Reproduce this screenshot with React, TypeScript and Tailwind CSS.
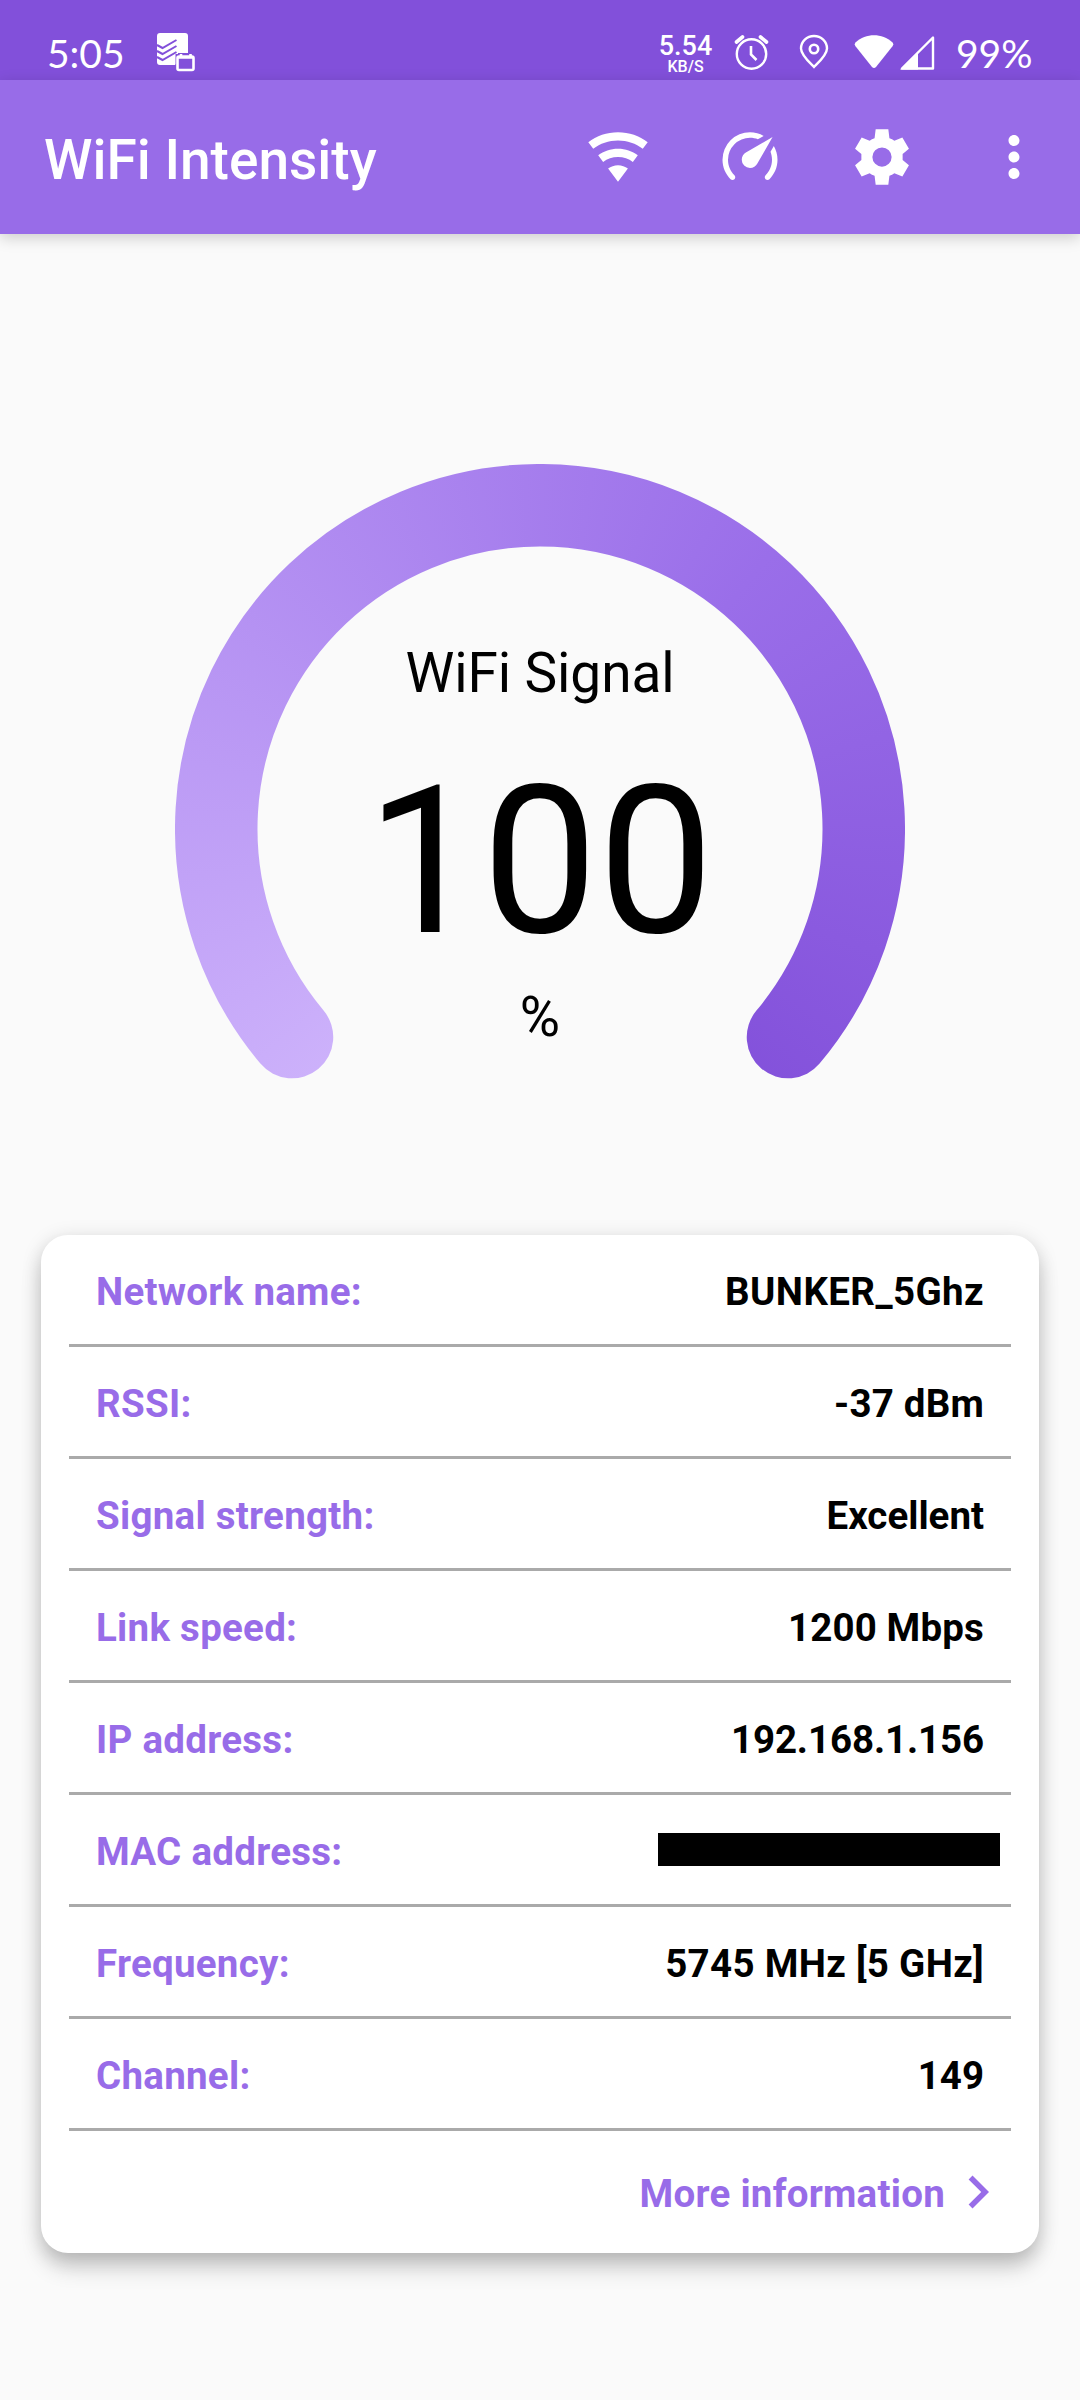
import { MdMoreVert, MdNavigateNext } from 'react-icons/md';

const details = [
  { label: 'Network name:', value: 'BUNKER_5Ghz', tracking: 'tracking-[0.4px]' },
  { label: 'RSSI:', value: '-37 dBm', tracking: 'tracking-[0.2px]' },
  { label: 'Signal strength:', value: 'Excellent', tracking: 'tracking-normal' },
  { label: 'Link speed:', value: '1200 Mbps', tracking: 'tracking-[0.15px]' },
  { label: 'IP address:', value: '192.168.1.156', tracking: 'tracking-[-0.1px]' },
  { label: 'MAC address:', value: null },
  { label: 'Frequency:', value: '5745 MHz [5 GHz]', tracking: 'tracking-[0.3px]' },
  { label: 'Channel:', value: '149', tracking: 'tracking-normal' },
];

function StatusBar() {
  return (
    <div className="h-20 bg-[#8250da] flex items-start text-white">
      <span className="ml-[47px] mt-[29px] w-[79px] font-['Lato'] text-[39px] leading-[48px] whitespace-nowrap">5:05</span>
      <svg className="ml-[30px] mt-[32px] w-10 h-10" viewBox="0 0 40 40" fill="none">
        <path d="M4 1h25a3 3 0 0 1 3 3v17H22v9l-3 3H4a3 3 0 0 1-3-3V4a3 3 0 0 1 3-3z" fill="#fff" />
        <path d="M1 13l5.500 3 14-8M1 19l5.500 3 14-8M1 25l5.500 3 14-8" stroke="#8250da" strokeWidth="2" />
        <path d="M19.500 22h20v18h-20z" fill="#8250da" />
        <rect x="21.500" y="24.500" width="16" height="13.500" rx="1.500" stroke="#fff" strokeWidth="2.600" />
        <path d="M21 25.500h17M25 22v3M34.500 22v3" stroke="#fff" strokeWidth="2.600" />
      </svg>
      <div className="ml-auto mt-[33px] w-[57px] flex flex-col items-center font-medium">
        <span className="text-[27px] leading-[27px]">5.54</span>
        <span className="text-[16px] leading-[14px]">KB/S</span>
      </div>
      <svg className="ml-[20px] mt-[34px] w-9 h-9" viewBox="0 0 36 36" fill="none" stroke="#fff">
        <circle cx="17.5" cy="20" r="14.7" strokeWidth="2.4" />
        <path d="M17 12v8.500l5.500 5.500" strokeWidth="2.6" />
        <path d="M2.500 8l6-5M32.500 8l-6-5" strokeWidth="3.6" strokeLinecap="round" />
      </svg>
      <svg className="ml-[28px] mt-[34px] w-8 h-9" viewBox="0 0 32 36" fill="none" stroke="#fff">
        <path d="M16 33C11 28 3 21 3 14.500a13 12.500 0 0 1 26 0C29 21 21 28 16 33z" strokeWidth="2.4" />
        <circle cx="16" cy="15" r="4.2" strokeWidth="2.6" />
      </svg>
      <svg className="ml-[24px] mt-[34px] w-10 h-9" viewBox="0 0 40 36" fill="#fff">
        <path d="M1.500 8.500C12-1.200 28-1.200 38.500 8.500q1.500 1.800 0 3.800L22 33q-2 2-4 0L1.500 12.300q-1.500-2 0-3.800z" />
      </svg>
      <svg className="ml-[5px] mt-[34px] w-9 h-9" viewBox="0 0 36 36">
        <path d="M34 3.500v31H3z" fill="none" stroke="#fff" strokeWidth="2.4" strokeLinejoin="round" />
        <path d="M1 35.500L19 17.500v18z" fill="#fff" />
      </svg>
      <span className="ml-[21px] mr-12 mt-[29px] w-[76px] font-['Lato'] text-[39px] leading-[48px] whitespace-nowrap">99%</span>
    </div>
  );
}

function AppBar() {
  return (
    <header className="relative h-[154px] bg-[#986ce8] flex items-center pl-11 pr-[33px] text-white shadow-[0_4px_14px_rgba(0,0,0,0.18)]">
      <h1 className="text-[55px] leading-[64px] font-medium mt-[5px]">WiFi Intensity</h1>
      <div className="ml-auto flex gap-[66px]">
        <svg className="w-[66px] h-[66px]" viewBox="0 0 24 24" fill="currentColor">
          <path d="M12,21L15.6,16.2C14.6,15.45 13.35,15 12,15C10.65,15 9.4,15.45 8.4,16.2L12,21M12,3C7.95,3 4.21,4.34 1.2,6.6L3,9C5.5,7.12 8.62,6 12,6C15.38,6 18.5,7.12 21,9L22.8,6.6C19.79,4.34 16.05,3 12,3M12,9C9.3,9 6.81,9.89 4.8,11.4L6.6,13.8C8.1,12.67 9.97,12 12,12C14.03,12 15.9,12.67 17.4,13.8L19.2,11.4C17.19,9.89 14.7,9 12,9Z" />
        </svg>
        <svg className="w-[66px] h-[66px]" viewBox="0 0 24 24" fill="currentColor">
          <path d="M12,16A3,3 0 0,1 9,13C9,11.88 9.61,10.9 10.5,10.39L20.21,4.77L14.68,14.35C14.18,15.33 13.17,16 12,16M12,3C13.81,3 15.5,3.5 16.97,4.32L14.87,5.53C14,5.19 13,5 12,5A8,8 0 0,0 4,13C4,15.21 4.89,17.21 6.34,18.65H6.35C6.74,19.04 6.74,19.67 6.35,20.06C5.96,20.45 5.32,20.45 4.93,20.07V20.07C3.12,18.26 2,15.76 2,13A10,10 0 0,1 12,3M22,13C22,15.76 20.88,18.26 19.07,20.07V20.07C18.68,20.45 18.05,20.45 17.66,20.06C17.27,19.67 17.27,19.04 17.66,18.65V18.65C19.11,17.2 20,15.21 20,13C20,12 19.81,11 19.46,10.1L20.67,8C21.5,9.5 22,11.18 22,13Z" />
        </svg>
        <svg className="w-[66px] h-[66px]" viewBox="0 0 24 24" fill="currentColor">
          <path
            fillRule="evenodd"
            d="M9.700 1.900H14.300L14.700 5.200Q15.700 5.500 16.500 6.100L19.400 4.900L21.800 9L19.500 10.900V13.100L21.800 15L19.400 19.100L16.500 17.900Q15.700 18.500 14.700 18.800L14.300 22.100H9.700L9.300 18.800Q8.300 18.500 7.500 17.900L4.600 19.100L2.200 15L4.500 13.100V10.900L2.200 9L4.600 4.900L7.500 6.100Q8.300 5.500 9.300 5.200ZM12 8.500A3.500 3.500 0 1 0 12 15.500A3.500 3.500 0 1 0 12 8.500Z"
          />
        </svg>
        <MdMoreVert className="w-[66px] h-[66px]" />
      </div>
    </header>
  );
}

function SignalGauge() {
  return (
    <div className="mt-[230px] mx-auto w-[730px] h-[730px] grid">
      <svg className="col-start-1 row-start-1" width="730" height="730" viewBox="0 0 730 730">
        <mask id="arc">
          {/* 260 degree arc, open at the bottom */}
          <path
            d="M117 573.1A323.750 323.750 0 1 1 613 573.1"
            fill="none"
            stroke="#fff"
            strokeWidth="82.5"
            strokeLinecap="round"
          />
        </mask>
        <foreignObject width="730" height="730" mask="url(#arc)">
          <div className="w-[730px] h-[730px] bg-[conic-gradient(from_180deg,#cfb5fc_0deg,#cdb2fb_40deg,#9a6ee9_220deg,#8250da_325deg,#8250da_360deg)]" />
        </foreignObject>
      </svg>
      <div className="col-start-1 row-start-1 flex flex-col items-center text-black">
        <span className="mt-[177px] text-[55px] leading-[64px] tracking-[-0.1px]">WiFi Signal</span>
        <span className="mt-[36px] text-[206px] leading-[242px]">100</span>
        <span className="mt-[2px] text-[55px] leading-[64px]">%</span>
      </div>
    </div>
  );
}

function DetailsCard() {
  return (
    <div className="mt-[41px] mx-[41px] h-[1018px] rounded-[27px] bg-white px-7 text-[38.5px] leading-[46px] font-bold shadow-[0_16px_22px_-2px_rgba(0,0,0,0.19),0_4px_20px_rgba(0,0,0,0.15)]">
      {details.map(({ label, value, tracking }) => (
        <div key={label} className="h-28 border-b-[3px] border-[#aaaaaa] px-[27px] flex items-center justify-between">
          <span className="mt-[5px] text-[#986ce8] tracking-[0.27px]">{label}</span>
          {value ? (
            <span className={`mt-[5px] text-black ${tracking}`}>{value}</span>
          ) : (
            <span className="-mr-4 w-[342px] h-[33px] bg-black" />
          )}
        </div>
      ))}
      <div className="h-[122px] flex items-center justify-end text-[#986ce8]">
        <span className="mt-[3px] tracking-[0.25px]">More information</span>
        <MdNavigateNext className="w-[66px] h-[66px]" />
      </div>
    </div>
  );
}

export default function App() {
  return (
    <div className="w-[1080px] h-[2400px] overflow-hidden bg-[#fafafa] font-['Roboto',sans-serif]">
      <StatusBar />
      <AppBar />
      <SignalGauge />
      <DetailsCard />
    </div>
  );
}
